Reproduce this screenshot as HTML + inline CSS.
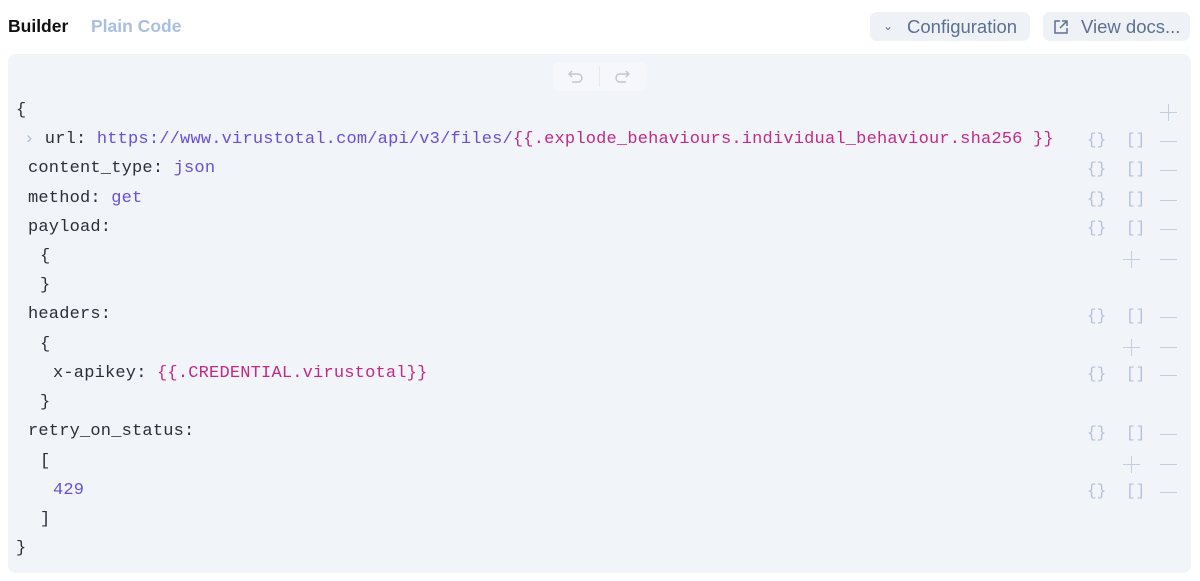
<!DOCTYPE html>
<html><head><style>
body{margin:0;width:1200px;height:581px;background:#fff;font-family:"Liberation Sans",sans-serif;position:relative;overflow:hidden}
.tab{position:absolute;top:16px;font-size:17.5px;font-weight:bold}
.btn{position:absolute;top:12px;height:29px;background:#eef2f7;border-radius:7px;color:#5e6f8f;font-size:18.5px;line-height:29px}
.panel{position:absolute;left:8px;top:54px;width:1183px;height:519px;background:#f1f4f8;border-radius:8px}
.r{position:absolute;left:0;height:29px;line-height:31px;font-family:"Liberation Mono",monospace;font-size:17px;letter-spacing:0.2px;color:#2a2f3a;white-space:pre}
.v{color:#6a4fd6}.t{color:#c12a86}
.ic{position:absolute;height:29px;line-height:29px;font-family:"Liberation Mono",monospace;font-size:16px;color:#b3c2db}
.mn{position:absolute;width:17px;height:1.2px;background:#c0cde2}
.pl{position:absolute;width:17px;height:17px}
.pl:before{content:"";position:absolute;left:0;top:8px;width:17px;height:1.2px;background:#c0cde2}
.pl:after{content:"";position:absolute;left:8px;top:0;width:1.2px;height:17px;background:#c0cde2}
</style></head><body>
<div class="tab" style="left:8px;color:#111">Builder</div>
<div class="tab" style="left:91px;color:#a9bfe0">Plain Code</div>
<div class="btn" style="left:870px;width:160px"><span style="position:absolute;left:13px;font-size:12px">&#8964;</span><span style="position:absolute;left:37px">Configuration</span></div>
<div class="btn" style="left:1043px;width:147px"><svg style="position:absolute;left:10px;top:7px" width="16" height="16" viewBox="0 0 16 16" fill="none" stroke="#5e6f8f" stroke-width="1.5"><path d="M7 2H2v12h12V9M9 2h5v5M14 2L7 9"/></svg><span style="position:absolute;left:38px">View docs...</span></div>
<div class="panel">
<div style="position:absolute;left:545px;top:8px;width:93px;height:29px;background:#f5f7fa;border-radius:5px">
<div style="position:absolute;left:46px;top:4px;width:1px;height:21px;background:#e6eaf0"></div>
<svg style="position:absolute;left:14px;top:7px" width="18" height="16" viewBox="0 0 18 16" fill="none" stroke="#bfc6d0" stroke-width="1.4"><path d="M5 2L2 5l3 3M2 5h9a4 4 0 010 8H5"/></svg>
<svg style="position:absolute;left:60px;top:7px" width="18" height="16" viewBox="0 0 18 16" fill="none" stroke="#bfc6d0" stroke-width="1.4"><path d="M13 2l3 3-3 3M16 5H7a4 4 0 000 8h6"/></svg>
</div>
</div>
<div style="position:absolute;left:0;top:0">
<div class="r" style="top:95px;left:16px">{</div>
<div class="r" style="top:124px;left:24px"><span style="color:#a9bfe0">›</span> url: <span class="v">https://www.virustotal.com/api/v3/files/</span><span class="t">{{.explode_behaviours.individual_behaviour.sha256 }}</span></div>
<div class="r" style="top:153px;left:28px">content_type: <span class="v">json</span></div>
<div class="r" style="top:183px;left:28px">method: <span class="v">get</span></div>
<div class="r" style="top:212px;left:28px">payload:</div>
<div class="r" style="top:241px;left:40px">{</div>
<div class="r" style="top:270px;left:40px">}</div>
<div class="r" style="top:299px;left:28px">headers:</div>
<div class="r" style="top:329px;left:40px">{</div>
<div class="r" style="top:358px;left:53px">x-apikey: <span class="t">{{.CREDENTIAL.virustotal}}</span></div>
<div class="r" style="top:387px;left:40px">}</div>
<div class="r" style="top:416px;left:28px">retry_on_status:</div>
<div class="r" style="top:446px;left:40px">[</div>
<div class="r" style="top:475px;left:53px"><span class="v">429</span></div>
<div class="r" style="top:504px;left:40px">]</div>
<div class="r" style="top:533px;left:16px">}</div>
</div>
<div id="icons"></div>
<script>
var rows=[[112,'p'],[141,'f'],[170,'f'],[200,'f'],[229,'f'],[259,'a'],[317,'f'],[347,'a'],[375,'f'],[434,'f'],[464,'a'],[492,'f']];
var h='';
rows.forEach(function(r){var c=r[0];
if(r[1]=='p'){h+='<div class="pl" style="top:'+(c-8)+'px;left:1160px"></div>';}
else if(r[1]=='a'){h+='<div class="pl" style="top:'+(c-8)+'px;left:1123px"></div><div class="mn" style="top:'+c+'px;left:1160px"></div>';}
else{h+='<div class="ic" style="top:'+(c-15)+'px;left:1087px">{}</div><div class="ic" style="top:'+(c-15)+'px;left:1126px">[]</div><div class="mn" style="top:'+c+'px;left:1160px"></div>';}
});
document.getElementById('icons').innerHTML=h;
</script>
</body></html>
